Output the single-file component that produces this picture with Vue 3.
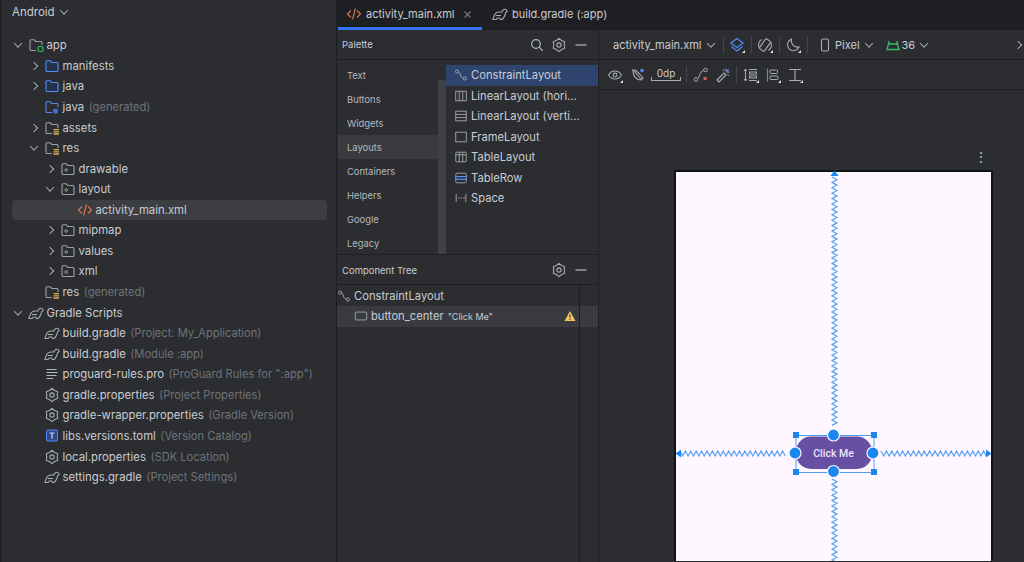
<template>
  <div class="ide">
    <!-- shared icons -->
    <svg class="defs" width="0" height="0">
      <defs>
        <symbol id="i-folder-blue" viewBox="0 0 16 16"><path d="M2 12.500V3.800c0-.6.4-1 1-1h3.200l1.600 1.700H13c.6 0 1 .4 1 1v7c0 .6-.4 1-1 1H3c-.6 0-1-.4-1-1z" fill="#25324d" stroke="#548af7" stroke-width="1.100"/></symbol>
        <symbol id="i-folder-gen" viewBox="0 0 16 16"><path d="M8 13.500H3c-.6 0-1-.4-1-1V3.800c0-.6.4-1 1-1h3.200l1.600 1.700H13c.6 0 1 .4 1 1V8" fill="none" stroke="#548af7" stroke-width="1.100"/><circle cx="11.500" cy="12" r="2.600" fill="#3f6fd0"/></symbol>
        <symbol id="i-folder-res" viewBox="0 0 16 16"><path d="M8 13.500H3c-.6 0-1-.4-1-1V3.800c0-.6.4-1 1-1h3.200l1.600 1.700H13c.6 0 1 .4 1 1V8" fill="none" stroke="#9da0a8" stroke-width="1.100"/><path d="M9.500 9.600H15M9.500 11.800H15M9.500 14H15" stroke="#d6ae58" stroke-width="1.300"/></symbol>
        <symbol id="i-folder-mod" viewBox="0 0 16 16"><path d="M8 13.500H3c-.6 0-1-.4-1-1V3.800c0-.6.4-1 1-1h3.200l1.600 1.700H13c.6 0 1 .4 1 1V8" fill="none" stroke="#9da0a8" stroke-width="1.100"/><rect x="10" y="9.500" width="5" height="5" rx="1.500" fill="#1f3a2a" stroke="#3dbb6b" stroke-width="1.200"/></symbol>
        <symbol id="i-folder-pkg" viewBox="0 0 16 16"><path d="M2 12.500V3.800c0-.6.4-1 1-1h3.200l1.600 1.700H13c.6 0 1 .4 1 1v7c0 .6-.4 1-1 1H3c-.6 0-1-.4-1-1z" fill="none" stroke="#9da0a8" stroke-width="1.100"/><circle cx="6.200" cy="9" r="1.300" fill="none" stroke="#9da0a8"/></symbol>
        <symbol id="i-xml" viewBox="0 0 16 16"><path d="M5 4.500 1.500 8 5 11.500M11 4.500 14.500 8 11 11.500M9.400 2.500 6.600 13.500" fill="none" stroke="#d0754a" stroke-width="1.200"/></symbol>
        <symbol id="i-gradle" viewBox="0 0 16 16"><path d="M.8 13.500 2.300 9.500C3.100 7 5 6 7.500 6H10C10.600 4 12.300 3 14 3.500L15.300 5.500 13.600 6.600 13 9C12.500 11 11 12 10.300 13.500H8.300L7.800 12H5.200L4.200 13.500zM3.700 9.500H9" fill="none" stroke="#a8abb2" stroke-width="1.050" stroke-linejoin="round"/></symbol>
        <symbol id="i-lines" viewBox="0 0 16 16"><path d="M2.500 3.500h10M2.500 6.500h11M2.500 9.500h10M2.500 12.500H9" stroke="#b4b8bf" stroke-width="1.100"/></symbol>
        <symbol id="i-gear" viewBox="0 0 16 16"><polygon :points="gearPoints" fill="none" stroke="#a8abb2" stroke-width="1.100" stroke-linejoin="round"/><circle cx="8" cy="8" r="2.100" fill="none" stroke="#a8abb2" stroke-width="1.100"/></symbol>
        <symbol id="i-toml" viewBox="0 0 16 16"><rect x="2.500" y="2" width="11" height="11" rx="1.500" fill="#2d4a87" stroke="#548af7"/><path d="M5.500 5h5M8 5v5.800" stroke="#c7d7f8" stroke-width="1.200"/></symbol>
        <symbol id="i-constraint" viewBox="0 0 16 16"><circle cx="3.500" cy="4" r="1.800" fill="none" stroke="#a8abb2"/><circle cx="12.500" cy="12" r="1.800" fill="none" stroke="#a8abb2"/><path d="M5.300 4.500c2.500.5 1 6.500 5.400 7.200" fill="none" stroke="#a8abb2"/></symbol>
        <symbol id="i-lin-h" viewBox="0 0 16 16"><rect x="2" y="2.500" width="12" height="11" fill="none" stroke="#a8abb2"/><path d="M6 2.500v11M10 2.500v11" stroke="#a8abb2"/></symbol>
        <symbol id="i-lin-v" viewBox="0 0 16 16"><rect x="2" y="2.500" width="12" height="11" fill="none" stroke="#a8abb2"/><path d="M2 6.200h12M2 9.800h12" stroke="#a8abb2"/></symbol>
        <symbol id="i-frame" viewBox="0 0 16 16"><rect x="2" y="2.500" width="12" height="11" fill="none" stroke="#a8abb2"/></symbol>
        <symbol id="i-button" viewBox="0 0 16 16"><rect x="1.500" y="3.500" width="13" height="9" rx="1" fill="none" stroke="#a8abb2"/></symbol>
        <symbol id="i-table" viewBox="0 0 16 16"><rect x="2" y="2.500" width="12" height="11" rx="1" fill="none" stroke="#a8abb2"/><path d="M2 5.500h12M6 2.500v11M10 2.500v11" stroke="#a8abb2"/></symbol>
        <symbol id="i-row" viewBox="0 0 16 16"><rect x="2" y="2.500" width="12" height="11" rx="1.500" fill="none" stroke="#a8abb2"/><path d="M2 6.500h12M2 9.500h12" stroke="#548af7" stroke-width="1.300"/></symbol>
        <symbol id="i-space" viewBox="0 0 16 16"><path d="M2.500 3.500v9M13.500 3.500v9" stroke="#a8abb2"/><path d="M4.500 8h8" stroke="#a8abb2" stroke-dasharray="2 1"/></symbol>
        <symbol id="i-search" viewBox="0 0 16 16"><circle cx="7" cy="7" r="4.300" fill="none" stroke="#b4b8bf" stroke-width="1.200"/><path d="m10.200 10.200 3.600 3.600" stroke="#b4b8bf" stroke-width="1.200"/></symbol>
        <symbol id="i-minus" viewBox="0 0 16 16"><path d="M2.500 8h11" stroke="#b4b8bf" stroke-width="1.200"/></symbol>
      </defs>
    </svg>

    <aside class="project">
      <div class="project-head">Android <span class="chev down"></span></div>
      <div class="tree">
        <div
          v-for="row in treeRows"
          :key="row.id"
          class="tree-row"
          :class="{ selected: row.selected }"
          :style="{ paddingLeft: 12 + row.depth * 16 + 'px' }"
        >
          <span class="chev-box">
            <span v-if="row.open !== undefined" class="chev" :class="row.open ? 'down' : 'right'"></span>
          </span>
          <svg class="tree-icon" width="16" height="16"><use :href="'#i-' + row.icon" /></svg>
          <span class="tree-name">{{ row.name }}</span>
          <span v-if="row.hint" class="tree-hint">{{ row.hint }}</span>
        </div>
      </div>
    </aside>

    <main class="editor">
      <div class="tabs">
        <div class="tab active">
          <svg width="16" height="16"><use href="#i-xml" /></svg>
          <span>activity_main.xml</span>
          <span class="tab-close">×</span>
        </div>
        <div class="tab">
          <svg width="16" height="16"><use href="#i-gradle" /></svg>
          <span>build.gradle (:app)</span>
        </div>
      </div>

      <div class="workspace">
        <section class="side">
          <div class="pane-head">
            <span>Palette</span>
            <div class="pane-tools">
              <svg width="16" height="16"><use href="#i-search" /></svg>
              <svg width="16" height="16"><use href="#i-gear" /></svg>
              <svg width="16" height="16"><use href="#i-minus" /></svg>
            </div>
          </div>
          <div class="palette">
            <div class="cats">
              <div v-for="c in categories" :key="c" class="cat" :class="{ on: c === 'Layouts' }">{{ c }}</div>
            </div>
            <div class="cat-scroll"><div class="thumb"></div></div>
            <div class="items">
              <div v-for="(it, i) in paletteItems" :key="it.name" class="item" :class="{ on: i === 0 }">
                <svg width="14" height="14"><use :href="'#i-' + it.icon" /></svg>
                <span>{{ it.name }}</span>
              </div>
            </div>
          </div>
          <div class="pane-head comp-head">
            <span>Component Tree</span>
            <div class="pane-tools">
              <svg width="16" height="16"><use href="#i-gear" /></svg>
              <svg width="16" height="16"><use href="#i-minus" /></svg>
            </div>
          </div>
          <div class="comp">
            <div class="comp-rows">
              <div class="comp-row root">
                <svg width="14" height="14"><use href="#i-constraint" /></svg>
                <span>ConstraintLayout</span>
              </div>
              <div class="comp-row child">
                <svg width="14" height="14"><use href="#i-button" /></svg>
                <span>button_center</span>
                <small>"Click Me"</small>
                <svg class="warn" width="12" height="12" viewBox="0 0 12 12">
                  <path d="M6 1 11.500 11H.5z" fill="#f2c55c" />
                  <path d="M6 4.500v3.300M6 8.800v1.100" stroke="#2b2d30" stroke-width="1.100" />
                </svg>
              </div>
            </div>
            <div class="comp-gutter"><div class="gutter-hl"></div></div>
          </div>
        </section>

        <section class="surface">
          <div class="bar bar-top">
            <span class="bar-text file">activity_main.xml</span>
            <span class="chev down"></span>
            <i class="sep"></i>
            <svg class="tool" width="16" height="16" viewBox="0 0 16 16">
              <path d="M8 1.500 14 6 8 10.500 2 6z" fill="none" stroke="#548af7" stroke-width="1.200" />
              <path d="M2.500 9.500 8 14l5.500-4.500" fill="none" stroke="#548af7" stroke-width="1.200" />
              <path d="M16 13v3h-3z" fill="#dfe1e5" />
            </svg>
            <i class="sep"></i>
            <svg class="tool" width="16" height="16" viewBox="0 0 16 16">
              <path d="M2.600 11.500A6.500 6.500 0 0 1 4.500 2.500M13.400 4.500A6.500 6.500 0 0 1 11.500 13.500" fill="none" stroke="#a8abb2" stroke-width="1.100" />
              <rect x="5" y="2" width="6" height="12" rx="1.600" transform="rotate(35 8 8)" fill="none" stroke="#a8abb2" stroke-width="1.100" />
              <path d="M16 13v3h-3z" fill="#dfe1e5" />
            </svg>
            <i class="sep"></i>
            <svg class="tool" width="16" height="16" viewBox="0 0 16 16">
              <path d="M6.500 2a6 6 0 1 0 7.500 8A6.500 6.500 0 0 1 6.500 2z" fill="none" stroke="#a8abb2" stroke-width="1.100" />
              <path d="M16 13v3h-3z" fill="#dfe1e5" />
            </svg>
            <i class="sep"></i>
            <svg class="phone-icon" width="12" height="14" viewBox="0 0 12 14">
              <rect x="2.500" y="1" width="7" height="12" rx="1.500" fill="none" stroke="#a8abb2" stroke-width="1.100" />
            </svg>
            <span class="bar-text">Pixel</span>
            <span class="chev down"></span>
            <svg class="droid" width="14" height="12" viewBox="0 0 14 12">
              <path d="M1 10.500h12L11.500 5h-9zM3.500 5 2.500 2M10.500 5l1-3" fill="none" stroke="#3dbb6b" stroke-width="1.300" />
            </svg>
            <span class="bar-text">36</span>
            <span class="chev down"></span>
            <span class="chev right far"></span>
          </div>
          <div class="bar bar-sub">
            <svg width="16" height="16" viewBox="0 0 16 16">
              <path d="M1.500 8C3 5.300 5.300 4 8 4s5 1.300 6.500 4C13 10.700 10.700 12 8 12S3 10.700 1.500 8z" fill="none" stroke="#a8abb2" stroke-width="1.100" />
              <circle cx="8" cy="8" r="1.900" fill="none" stroke="#a8abb2" stroke-width="1.100" />
              <path d="M16 13v3h-3z" fill="#dfe1e5" />
            </svg>
            <svg class="gap-l" width="16" height="16" viewBox="0 0 16 16">
              <path d="M3 4c0 5 3 9 8 9l2-2-2.500-3L8 5.500 5 3z" fill="none" stroke="#a8abb2" stroke-width="1.100" />
              <path d="M2 2l10 11" stroke="#a8abb2" stroke-width="1.100" />
              <circle cx="12" cy="3.500" r="1.800" fill="#548af7" />
            </svg>
            <span class="margin-box">0dp</span>
            <i class="sep sub-sep"></i>
            <svg width="16" height="16" viewBox="0 0 16 16">
              <circle cx="3" cy="12.500" r="1.800" fill="none" stroke="#a8abb2" />
              <circle cx="12.500" cy="3" r="1.800" fill="none" stroke="#a8abb2" />
              <path d="M4.500 11.500C7 11 6 4.500 10.800 3.500" fill="none" stroke="#a8abb2" />
              <rect x="10.500" y="10" width="3" height="3" fill="#db5c5c" />
            </svg>
            <svg class="gap-m" width="16" height="16" viewBox="0 0 16 16">
              <path d="M2 13 9 6l2 2-7 7z" fill="none" stroke="#a8abb2" stroke-width="1.200" />
              <path d="M11 1.500v3M14.500 5h-3M13.800 2.200l-1.800 1.800M8 2.500l1 1.500M14 8.500l-1.500-.8" stroke="#8fb2f5" />
            </svg>
            <i class="sep sub-sep"></i>
            <svg width="16" height="16" viewBox="0 0 16 16">
              <path d="M2.500 2v12M1 4l1.500-2L4 4M1 12l1.500 2L4 12" fill="none" stroke="#a8abb2" />
              <path d="M6 2.500h8M6 13.500h8" stroke="#a8abb2" />
              <rect x="6.500" y="5" width="7" height="2" fill="none" stroke="#a8abb2" />
              <rect x="6.500" y="9" width="7" height="2" fill="none" stroke="#a8abb2" />
              <path d="M16 13v3h-3z" fill="#dfe1e5" />
            </svg>
            <svg class="gap-s" width="16" height="16" viewBox="0 0 16 16">
              <path d="M2.500 1.500v13" stroke="#548af7" stroke-width="1.200" />
              <rect x="5" y="3" width="7.500" height="3.500" rx="1" fill="none" stroke="#a8abb2" />
              <rect x="5" y="9" width="8" height="3.500" rx="1" fill="none" stroke="#a8abb2" />
              <path d="M16 13v3h-3z" fill="#dfe1e5" />
            </svg>
            <svg class="gap-s" width="16" height="16" viewBox="0 0 16 16">
              <path d="M2 2.500h12M2 13.500h12M8 2.500v11" fill="none" stroke="#a8abb2" stroke-width="1.100" />
              <path d="M16 13v3h-3z" fill="#dfe1e5" />
            </svg>
          </div>

          <div class="canvas">
            <span class="dots">⋮</span>
            <svg class="blueprint" viewBox="599 91 425 471" width="425" height="471">
              <rect x="675" y="172" width="317" height="400" fill="#fef7ff" stroke="#111214" stroke-width="2" />
              <g fill="none" stroke="#55a3f5" stroke-width="1.200">
                <polyline :points="zigTop" />
                <polyline :points="zigBottom" />
                <polyline :points="zigLeft" />
                <polyline :points="zigRight" />
              </g>
              <rect x="796" y="436.500" width="78" height="37" fill="none" stroke="#4a9ff5" />
              <g fill="#1a86f0">
                <path d="M830.500 177 834.500 171.500 838.500 177z" />
                <path d="M681 450.500 675.500 454.500 681 458.500z" />
                <path d="M986 450.500 991.500 454.500 986 458.500z" />
              </g>
              <rect x="796" y="437.500" width="76" height="32.500" rx="15" fill="#6750a4" />
              <text x="833.500" y="458" text-anchor="middle" class="btn-text">Click Me</text>
              <g fill="#1a86f0">
                <rect x="793" y="433" width="6" height="6" />
                <rect x="871" y="433" width="6" height="6" />
                <rect x="793" y="470" width="6" height="6" />
                <rect x="871" y="470" width="6" height="6" />
              </g>
              <g fill="#1a86f0" stroke="#fef7ff" stroke-width="1.200">
                <circle cx="833.500" cy="436" r="6" />
                <circle cx="833.500" cy="472.500" r="6" />
                <circle cx="795" cy="454" r="6" />
                <circle cx="873" cy="454" r="6" />
              </g>
            </svg>
          </div>
        </section>
      </div>
    </main>
  </div>
</template>

<script setup>
const treeRows = [
  { name: 'app', icon: 'folder-mod', depth: 0, open: true },
  { name: 'manifests', icon: 'folder-blue', depth: 1, open: false },
  { name: 'java', icon: 'folder-blue', depth: 1, open: false },
  { name: 'java', hint: '(generated)', icon: 'folder-gen', depth: 1 },
  { name: 'assets', icon: 'folder-res', depth: 1, open: false },
  { name: 'res', icon: 'folder-res', depth: 1, open: true },
  { name: 'drawable', icon: 'folder-pkg', depth: 2, open: false },
  { name: 'layout', icon: 'folder-pkg', depth: 2, open: true },
  { name: 'activity_main.xml', icon: 'xml', depth: 3, selected: true },
  { name: 'mipmap', icon: 'folder-pkg', depth: 2, open: false },
  { name: 'values', icon: 'folder-pkg', depth: 2, open: false },
  { name: 'xml', icon: 'folder-pkg', depth: 2, open: false },
  { name: 'res', hint: '(generated)', icon: 'folder-res', depth: 1 },
  { name: 'Gradle Scripts', icon: 'gradle', depth: 0, open: true },
  { name: 'build.gradle', hint: '(Project: My_Application)', icon: 'gradle', depth: 1 },
  { name: 'build.gradle', hint: '(Module :app)', icon: 'gradle', depth: 1 },
  { name: 'proguard-rules.pro', hint: '(ProGuard Rules for ":app")', icon: 'lines', depth: 1 },
  { name: 'gradle.properties', hint: '(Project Properties)', icon: 'gear', depth: 1 },
  { name: 'gradle-wrapper.properties', hint: '(Gradle Version)', icon: 'gear', depth: 1 },
  { name: 'libs.versions.toml', hint: '(Version Catalog)', icon: 'toml', depth: 1 },
  { name: 'local.properties', hint: '(SDK Location)', icon: 'gear', depth: 1 },
  { name: 'settings.gradle', hint: '(Project Settings)', icon: 'gradle', depth: 1 }
].map((r, i) => ({ ...r, id: i }))

const categories = ['Text', 'Buttons', 'Widgets', 'Layouts', 'Containers', 'Helpers', 'Google', 'Legacy']

const paletteItems = [
  { name: 'ConstraintLayout', icon: 'constraint' },
  { name: 'LinearLayout (hori...', icon: 'lin-h' },
  { name: 'LinearLayout (verti...', icon: 'lin-v' },
  { name: 'FrameLayout', icon: 'frame' },
  { name: 'TableLayout', icon: 'table' },
  { name: 'TableRow', icon: 'row' },
  { name: 'Space', icon: 'space' }
]

// 12 point cog for the settings icon
const gearPoints = Array.from({ length: 12 }, (_, i) => {
  const r = i % 2 ? 5.2 : 6.6
  const a = (i * Math.PI) / 6 - Math.PI / 2
  return (8 + r * Math.cos(a)).toFixed(2) + ',' + (8 + r * Math.sin(a)).toFixed(2)
}).join(' ')

// constraint springs
function zigzag(from, to, fixed, vertical) {
  const pts = []
  const step = 2.7
  const n = Math.floor((to - from) / step)
  for (let i = 0; i <= n; i++) {
    const along = from + i * step
    const off = i % 2 ? 2.5 : -2.5
    pts.push(vertical ? `${fixed + off},${along}` : `${along},${fixed + off}`)
  }
  return pts.join(' ')
}

const zigTop = zigzag(178, 428, 834.5, true)
const zigBottom = zigzag(480, 564, 834.5, true)
const zigLeft = zigzag(680, 787, 454.5, false)
const zigRight = zigzag(881, 987, 454.5, false)
</script>

<style scoped>
.ide {
  display: grid;
  grid-template-columns: 337px 1fr;
  width: 1024px;
  height: 562px;
  overflow: hidden;
  background: #2b2d30;
  color: #c9ccd3;
  font: 11.2px Inter, "Liberation Sans", sans-serif;
}
.defs { position: absolute; }

.project { border-left: 1px solid #1e1f22; border-right: 1px solid #1e1f22; }
.project-head { height: 30px; padding: 0 0 0 11px; display: flex; align-items: center; gap: 6px; font-size: 11.5px; margin-top: -3px; }
.tree { padding-top: 8px; display: flex; flex-direction: column; }
.tree-row { height: 20.57px; display: flex; align-items: center; flex: none; margin-right: 9px; margin-left: -2px; font-size: 11.35px; }
.tree-row.selected { background: #3c3e42; border-radius: 4px; margin-left: 11px; padding-left: 44px !important; }
.chev-box { width: 14px; display: flex; justify-content: center; flex: none; }
.tree-row.selected .chev-box { width: 18px; }
.tree-icon { margin: 0 1px 0 3px; flex: none; }
.tree-name { margin-left: 1.5px; white-space: nowrap; }
.tree-hint { margin-left: 4.5px; color: #6f737a; white-space: nowrap; font-size: 11.15px; }

.chev { display: inline-block; width: 5px; height: 5px; border-right: 1px solid #a8abb2; border-bottom: 1px solid #a8abb2; flex: none; }
.chev.down { transform: translateY(-1.5px) rotate(45deg); }
.chev.right { transform: rotate(-45deg); }

.editor { display: flex; flex-direction: column; min-width: 0; }
.tabs { height: 30px; background: #1e1f22; display: flex; flex: none; }
.tab { display: flex; align-items: center; gap: 4px; padding: 0 9px 2px 10px; font-size: 11px; }
.tab.active { width: 144px; margin-left: 1px; box-sizing: border-box; border-bottom: 3px solid #3574f0; padding: 0 0 0 8px; }
.tab-close { margin-left: 4px; color: #6f737a; font-size: 15px; }

.workspace { flex: 1; display: flex; min-height: 0; }
.side { width: 261px; flex: none; display: flex; flex-direction: column; border-right: 1px solid #1e1f22; }
.pane-head { height: 30px; flex: none; box-sizing: border-box; display: flex; align-items: center; justify-content: space-between; padding: 0 9px 0 5px; font-size: 9.5px; border-bottom: 1px solid #1e1f22; }
.pane-tools { display: flex; gap: 6px; }
.comp-head { border-top: 1px solid #1e1f22; height: 31px; padding-top: 1px; }

.palette { height: 194px; flex: none; display: flex; }
.cats { width: 100px; flex: none; padding-top: 3px; margin-left: 1px; }
.cat { height: 24px; line-height: 26px; padding-left: 9px; font-size: 9.4px; color: #b4b8bf; box-sizing: border-box; }
.cat.on { background: #393b40; }
.cat-scroll { width: 8px; flex: none; display: flex; flex-direction: column; }
.thumb { margin-top: 20px; flex: 1; background: #3e4044; }
.items { flex: 1; padding-top: 5px; }
.item { height: 20.5px; display: flex; align-items: center; gap: 3px; padding-left: 8px; }
.item.on { background: #2e436e; }

.comp { flex: 1; display: flex; }
.comp-rows { width: 242px; flex: none; padding-top: 0.5px; border-right: 1px solid #1e1f22; }
.comp-row { height: 20.5px; display: flex; align-items: center; gap: 3px; }
.comp-row.root { padding-left: 0; }
.comp-row.child { padding-left: 17px; background: #393b40; }
.comp-row small { font-size: 9px; margin-left: 1px; }
.warn { margin-left: auto; margin-right: 3px; }
.comp-gutter { flex: 1; padding-top: 21px; }
.gutter-hl { height: 20.5px; background: #393b40; }

.surface { flex: 1; display: flex; flex-direction: column; min-width: 0; }
.bar { height: 30px; flex: none; box-sizing: border-box; display: flex; align-items: center; border-bottom: 1px solid #1e1f22; }
.bar-top { padding-left: 14px; }
.bar-text { font-size: 11px; white-space: nowrap; }
.file + .chev { margin-left: 7px; }
.sep { width: 1px; height: 17px; background: #43454a; margin: 0 5.5px; flex: none; }
.file + .chev + .sep { margin-left: 9px; }
.tool { flex: none; }
.phone-icon { margin: 0 4px 0 6px; }
.bar .bar-text + .chev { margin-left: 6px; }
.droid { margin-left: 14px; margin-right: 2px; }
.far { margin-left: auto; margin-right: 3px; }
.bar-sub { padding-left: 8px; }
.gap-l { margin-left: 7px; }
.gap-m { margin-left: 6px; }
.gap-s { margin-left: 6px; }
.margin-box {
  margin-left: 5px;
  width: 30px;
  height: 13px;
  line-height: 10px;
  text-align: center;
  font-size: 10px;
  flex: none;
  background:
    linear-gradient(#a8abb2, #a8abb2) left bottom / 1px 4px no-repeat,
    linear-gradient(#a8abb2, #a8abb2) right bottom / 1px 4px no-repeat,
    linear-gradient(#a8abb2, #a8abb2) left bottom / 100% 1px no-repeat;
}
.sub-sep { margin: 0 6px 0 5px; }

.canvas { flex: 1; position: relative; overflow: hidden; background: #2b2d30; }
.blueprint { position: absolute; left: 0; top: 0; display: block; }
.dots { position: absolute; left: 375px; top: 60px; font-size: 14px; line-height: 14px; color: #b4b8bf; }
.btn-text { font: 500 10.5px Roboto, Inter, sans-serif; fill: #ece4f7; }
</style>
